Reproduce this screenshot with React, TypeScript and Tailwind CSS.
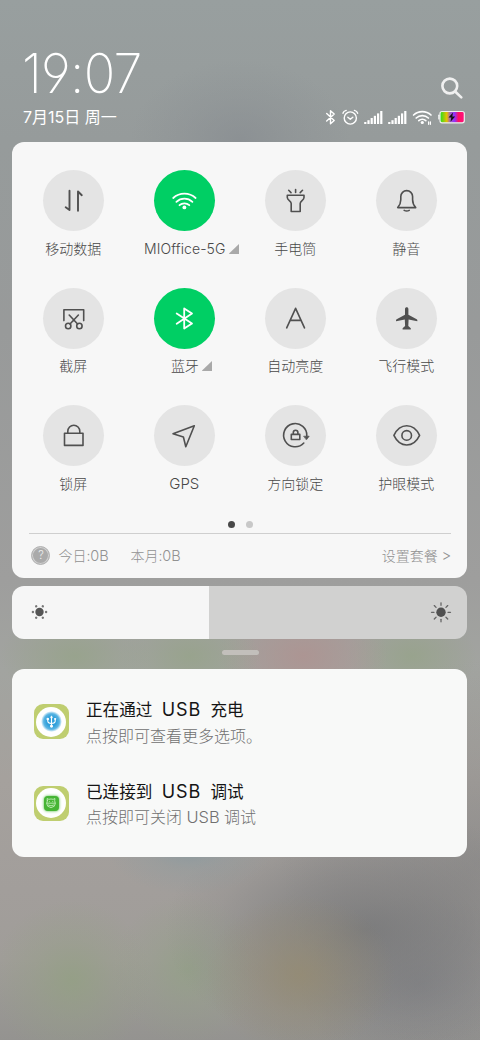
import type { ReactNode } from "react";

type Tile = { label: string; icon: ReactNode; on?: boolean; expand?: boolean; labelClass?: string };

const tiles: Tile[] = [
  {
    label: "移动数据",
    icon: <path d="M26.5 20.7V40L22.7 37.3M35 40.7V21.5L38.8 25.2" strokeWidth="1.9" />,
  },
  {
    label: "MIOffice-5G",
    on: true,
    expand: true,
    labelClass: "tracking-[0.1px] left-[0.5px]",
    icon: (
      <>
        <path d="M19.2 28A16.5 16.5 0 0 1 41.6 28M22.4 31.8A11.8 11.8 0 0 1 38.4 31.8M25.5 35.2A7.2 7.2 0 0 1 35.3 35.2" strokeWidth="1.8" />
        <circle cx="30.4" cy="37.4" r="1.9" fill="currentColor" stroke="none" />
      </>
    ),
  },
  {
    label: "手电筒",
    icon: (
      <path d="M22.3 25.3H39V27.6C39 30.4 35.2 31 35.2 33.6V41.5H26.2V33.6C26.2 31 22.3 30.4 22.3 27.6ZM30.6 19.6V22.4M23.7 20.3L26 22.6M37.5 20.3L35.2 22.6" />
    ),
  },
  {
    label: "静音",
    icon: (
      <path d="M21.7 37.6C23.8 35.2 24.8 32.8 24.8 29.7V26.5A5.9 5.9 0 0 1 36.6 26.5V29.7C36.6 32.8 37.6 35.2 39.7 37.6ZM28.2 40.4Q30.7 41.7 33.2 40.4" />
    ),
  },
  {
    label: "截屏",
    icon: (
      <>
        <path d="M20.9 32.6V21.8H40.7V32.6M26.2 27L34.6 36M35.4 27L27 36" />
        <circle cx="25.2" cy="38" r="2.7" />
        <circle cx="36.4" cy="38" r="2.7" />
      </>
    ),
  },
  {
    label: "蓝牙",
    on: true,
    expand: true,
    labelClass: "left-[0.6px]",
    icon: <path d="M22.7 25.4L38 35.4L30.2 40.6V20.4L38 25.6L22.7 35.8" strokeWidth="1.8" />,
  },
  { label: "自动亮度", icon: <path d="M21.7 39.8L30.6 20.3L39.5 39.8M25.2 32.4H36" /> },
  {
    label: "飞行模式",
    icon: (
      <path
        d="M29 21C29 18.7 32.4 18.7 32.4 21V26.7L40.7 31.3Q41.8 32 41.3 33.3L32.6 31.4L32.3 38L34.8 40.2V41.5H26.6V40.2L29.1 38L28.8 31.4L20.1 33.3Q19.6 32 20.7 31.3L29 26.7Z"
        fill="currentColor"
        stroke="none"
      />
    ),
  },
  {
    label: "锁屏",
    icon: <path d="M21.5 28.2H40V40.4H21.5ZM24.8 28V26.2A6 6 0 0 1 36.8 26.2V28" />,
  },
  {
    label: "GPS",
    labelClass: "text-[15px]!",
    icon: <path d="M40.3 20.8L19 28.8L29.4 32L31.8 41.8Z" />,
  },
  {
    label: "方向锁定",
    icon: (
      <>
        <path d="M41.8 31A11.6 11.6 0 1 0 38.8 38M26.3 29.4H34.8V34.5H26.3ZM28.3 29V27.6A2.3 2.3 0 0 1 32.9 27.6V29" />
        <path d="M39 31.2H44.2L41.6 34.6Z" fill="currentColor" strokeWidth="0.7" />
      </>
    ),
  },
  {
    label: "护眼模式",
    icon: (
      <>
        <path d="M17.9 30.4C24 17.6 37.5 17.6 43.6 30.4C37.5 43.2 24 43.2 17.9 30.4Z" />
        <circle cx="30.7" cy="30.4" r="4.8" />
      </>
    ),
  },
];

function QuickTile({ label, icon, on, expand, labelClass = "" }: Tile) {
  return (
    <div className="flex h-[117.3px] flex-col items-center">
      <div className={`size-[61px] shrink-0 rounded-full ${on ? "bg-[#00cf64] text-white" : "bg-[#e4e4e4] text-[#505050]"}`}>
        <svg viewBox="0 0 61 61" className="size-full" fill="none" stroke="currentColor" strokeWidth="1.6" strokeLinecap="round" strokeLinejoin="round">
          {icon}
        </svg>
      </div>
      <div className={`relative mt-[6.7px] text-sm leading-[22px] whitespace-nowrap text-[#484848] ${labelClass}`}>
        {label}
        {expand && (
          <svg viewBox="0 0 10 10" className="absolute top-[6px] -right-[13.5px] size-[10px]" fill="#a9a9a9">
            <path d="M10 0V10H0.3Q-0.2 9.7 0.3 9.2Z" />
          </svg>
        )}
      </div>
    </div>
  );
}

function StatusIcons() {
  return (
    <svg viewBox="324 107 144 20" className="h-5 w-36" fill="none" stroke="#fff" strokeWidth="1.4" strokeLinecap="round" strokeLinejoin="round">
      <defs>
        <linearGradient id="battery" x1="0" x2="1" y1="0" y2="0">
          <stop offset="0" stopColor="#20e020" />
          <stop offset=".28" stopColor="#e8c000" />
          <stop offset=".42" stopColor="#a060c0" />
          <stop offset=".6" stopColor="#9030ff" />
          <stop offset=".76" stopColor="#ff1060" />
          <stop offset="1" stopColor="#ff1080" />
        </linearGradient>
      </defs>
      <path d="M326.7 113.5L334.2 120.5L330.5 123.8V110.7L334.2 114L326.7 121" />
      <circle cx="350.3" cy="118" r="6.1" />
      <path d="M347.8 117.2L350.3 119.3L352.8 117.2M342.9 113.2Q343.6 111 346.2 110.4M357.7 113.2Q357 111 354.4 110.4" />
      {[364.2, 388.2].map((x) => (
        <g key={x} fill="#fff" stroke="none">
          <rect x={x} y="122" width="2.2" height="2" />
          <rect x={x + 3.2} y="120.2" width="2.2" height="3.8" />
          <rect x={x + 6.4} y="118" width="2.2" height="6" />
          <rect x={x + 9.6} y="115.8" width="2.2" height="8.2" />
          <rect x={x + 12.8} y="113.4" width="2.2" height="10.6" />
          <rect x={x + 16} y="111" width="2.2" height="13" />
        </g>
      ))}
      <path d="M413.6 115A12.8 12.8 0 0 1 431 115M416.2 118A8.9 8.9 0 0 1 428.4 118M418.8 120.7A5.2 5.2 0 0 1 425.8 120.7" strokeWidth="1.7" />
      <circle cx="422.3" cy="122.5" r="1.6" fill="#fff" stroke="none" />
      <path d="M428.6 121.8V124.3M430.4 121.8V124.3" strokeWidth="1.2" />
      <rect x="440" y="111.5" width="24.3" height="11.3" rx="2" fill="url(#battery)" stroke="#eee" strokeWidth="1.2" />
      <path d="M438.9 115.2V119" strokeWidth="1.2" />
      <path d="M453 112.6L448.5 117.6H451.3L450.5 121.7L455.2 116.5H452.3Z" fill="#111" stroke="none" />
    </svg>
  );
}

function Notification({ title, text, icon }: { title: ReactNode; text: ReactNode; icon: ReactNode }) {
  return (
    <div className="flex h-[81.5px] items-start">
      <div className="mt-[6.4px] flex size-[35px] shrink-0 items-center justify-center rounded-[9px] bg-[#bfce70]">
        <div className="flex size-[30px] items-center justify-center rounded-full bg-white">{icon}</div>
      </div>
      <div className="ml-[17px] whitespace-pre">
        <div className="h-[24px] text-[16.6px] leading-[24px] font-normal text-[#151515]">{title}</div>
        <div className="mt-[0.5px] text-[16px] leading-[26px] text-[#707070]">{text}</div>
      </div>
    </div>
  );
}

export default function App() {
  return (
    <div className="flex h-[1040px] w-[480px] flex-col overflow-hidden bg-[radial-gradient(110px_80px_at_240px_140px,#858a8f99,#858a8f44_50%,#858a8f00),radial-gradient(75px_45px_at_75px_656px,#96a389cc,#96a38966_50%,#96a38900),radial-gradient(70px_45px_at_190px_656px,#96a389cc,#96a38966_50%,#96a38900),radial-gradient(85px_60px_at_303px_656px,#ae9391dd,#ae939177_50%,#ae939100),radial-gradient(65px_45px_at_412px_656px,#96a389cc,#96a38966_50%,#96a38900),radial-gradient(85px_50px_at_190px_845px,#8b9a9f,#8b9a9f55_50%,#8b9a9f00),radial-gradient(95px_80px_at_300px_975px,#968b6fbb,#968b6f55_50%,#968b6f00),radial-gradient(200px_125px_at_365px_930px,#727375bb,#72737566_45%,#72737522_75%,#72737500),radial-gradient(120px_90px_at_420px_985px,#7a7c8388,#7a7c8300),radial-gradient(80px_80px_at_72px_980px,#93a083cc,#93a08355_50%,#93a08300),radial-gradient(75px_75px_at_188px_970px,#93a087cc,#93a08755_50%,#93a08700),radial-gradient(200px_200px_at_480px_860px,#80808088,#80808033_50%,#80808000),linear-gradient(180deg,#989f9f_0px,#969b9b_140px,#989a9a_330px,#9e9e9d_580px,#a2a4a0_670px,#a5a19d_780px,#a29e9b_890px,#a09d99_960px,#949390_1040px)] [font-family:Inter,'Noto_Sans_CJK_SC',sans-serif] font-light">
      <header className="flex h-[142px] items-start justify-between pt-[45px] pr-3 pl-[22px] text-white">
        <div>
          <div className="h-[59px] w-fit origin-left scale-x-[0.957] text-[54.5px] leading-[56px] font-[230] tracking-[-0.8px] whitespace-nowrap [font-feature-settings:'ss01']">19:07</div>
          <div className="pl-px text-base leading-[26px] font-normal whitespace-nowrap">7月15日 周一</div>
        </div>
        <div className="flex flex-col items-end">
          <svg viewBox="0 0 24 24" className="mt-[31px] mr-[4.5px] size-6" fill="none" stroke="#f0f0f0" strokeWidth="2.6" strokeLinecap="round">
            <circle cx="9.8" cy="10" r="7.4" />
            <path d="M15.4 15.7L21.3 21.4" />
          </svg>
          <div className="mt-[7px]">
            <StatusIcons />
          </div>
        </div>
      </header>

      <section className="ml-[12.4px] flex h-[435.5px] w-[455px] shrink-0 flex-col rounded-xl bg-[#f7f7f7]">
        <div className="grid h-[377px] grid-cols-4 content-start pt-[28.3px] pr-[5.6px] pl-[5.4px]">
          {tiles.map((tile) => (
            <QuickTile key={tile.label} {...tile} />
          ))}
        </div>
        <div className="flex h-[14px] items-center justify-center gap-[11px] pl-px">
          <span className="mt-[-4px] size-[7px] rounded-full bg-[#484848]" />
          <span className="mt-[-4px] size-[7px] rounded-full bg-[#c8c8c8]" />
        </div>
        <div className="mr-4 ml-[16.5px] flex h-[44px] items-center border-t border-[#cfcfcf] pl-[2.5px] text-[14px] text-[#929292]">
          <span className="flex size-[19px] items-center justify-center rounded-full border border-[#b5b5b5] bg-[#aaa] text-[11px] leading-none text-[#eee] ring-1 ring-[#d2d2d2] ring-inset">?</span>
          <span className="ml-[8px] w-[72px] whitespace-nowrap">今日:<span className="text-[14.5px]">0B</span></span>
          <span className="whitespace-nowrap">本月:<span className="text-[14.5px]">0B</span></span>
          <span className="ml-auto leading-[22px] whitespace-nowrap">设置套餐 <span className="text-[15px]">&gt;</span></span>
        </div>
      </section>

      <section className="mt-2 ml-[12.4px] flex h-[53.5px] w-[455px] shrink-0 items-center justify-between rounded-xl bg-[linear-gradient(90deg,#f6f6f6_197.5px,#d1d1d0_197.5px)] pr-[15.4px] pl-[18.6px]">
        <svg viewBox="0 0 18 18" className="size-[18px]" fill="#555">
          <circle cx="8.5" cy="9" r="4.2" />
          {[0, 60, 120, 180, 240, 300].map((a) => (
            <circle key={a} cx="15.1" cy="9" r="1.2" fill="#777" transform={`rotate(${a} 8.5 9)`} />
          ))}
        </svg>
        <svg viewBox="0 0 22 22" className="size-[22px]" fill="#505050" stroke="#666" strokeWidth="1.3" strokeLinecap="round">
          <circle cx="11" cy="11.3" r="4.7" stroke="none" />
          {[0, 45, 90, 135, 180, 225, 270, 315].map((a) => (
            <path key={a} d="M18 11.3H20.5" transform={`rotate(${a} 11 11.3)`} />
          ))}
        </svg>
      </section>

      <div className="flex h-[30px] shrink-0 justify-center pt-[11px]">
        <div className="h-[5px] w-[37px] rounded-[2.5px] bg-[#c2bfbb]" />
      </div>

      <section className="ml-[12.4px] h-[188px] w-[455px] shrink-0 rounded-xl bg-[#f8f9f8] pt-[29px] pl-[21.6px]">
        <Notification
          title={<>正在通过<span className="mr-[9.5px] ml-[9.5px] text-[18px] tracking-[0.8px]">USB</span>充电</>}
          text="点按即可查看更多选项。"
          icon={
            <div className="flex size-[21px] items-center justify-center rounded-full bg-[radial-gradient(circle_closest-side,#2f9fda_45%,#5bb5e3_75%,#fff_100%)]">
              <svg viewBox="0 0 14 14" className="size-[13px]" fill="none" stroke="#fff" strokeWidth="1.2" strokeLinecap="round">
                <path d="M7 2V12M3 4.5V6.5Q3 9 7 9Q11 9 11 6.5V4.5" />
                <path d="M5.8 2.6L7 .8L8.2 2.6Z" fill="#fff" strokeWidth=".5" />
                <circle cx="3" cy="4.3" r=".8" fill="#fff" />
                <rect x="10.2" y="3.5" width="1.6" height="1.6" fill="#fff" strokeWidth=".4" />
                <circle cx="7" cy="12" r="1" fill="#fff" />
              </svg>
            </div>
          }
        />
        <Notification
          title={<>已连接到<span className="mr-[9.5px] ml-[9.5px] text-[18px] tracking-[0.8px]">USB</span>调试</>}
          text={<>点按即可关闭 <span className="text-[16.4px]">USB</span> 调试</>}
          icon={
            <div className="flex size-[15px] items-center justify-center rounded-[4px] bg-[#46b535] shadow-[0_0_3px_#46b535]">
              <svg viewBox="0 0 14 14" className="size-[12px]" fill="none" stroke="#c9f0c0" strokeWidth="1" strokeLinecap="round" strokeLinejoin="round">
                <path d="M2.7 4.2L2.4 1.8L4.5 2.7Q7 1.9 9.5 2.7L11.6 1.8L11.3 4.2Q13 8 10.8 10.8Q7 14 3.2 10.8Q1 8 2.7 4.2ZM2.2 7.2H11.8M4 9.5Q7 11.3 10 9.5" />
                <path d="M5 5.2H5.1M9 5.2H9.1" />
              </svg>
            </div>
          }
        />
      </section>
    </div>
  );
}
